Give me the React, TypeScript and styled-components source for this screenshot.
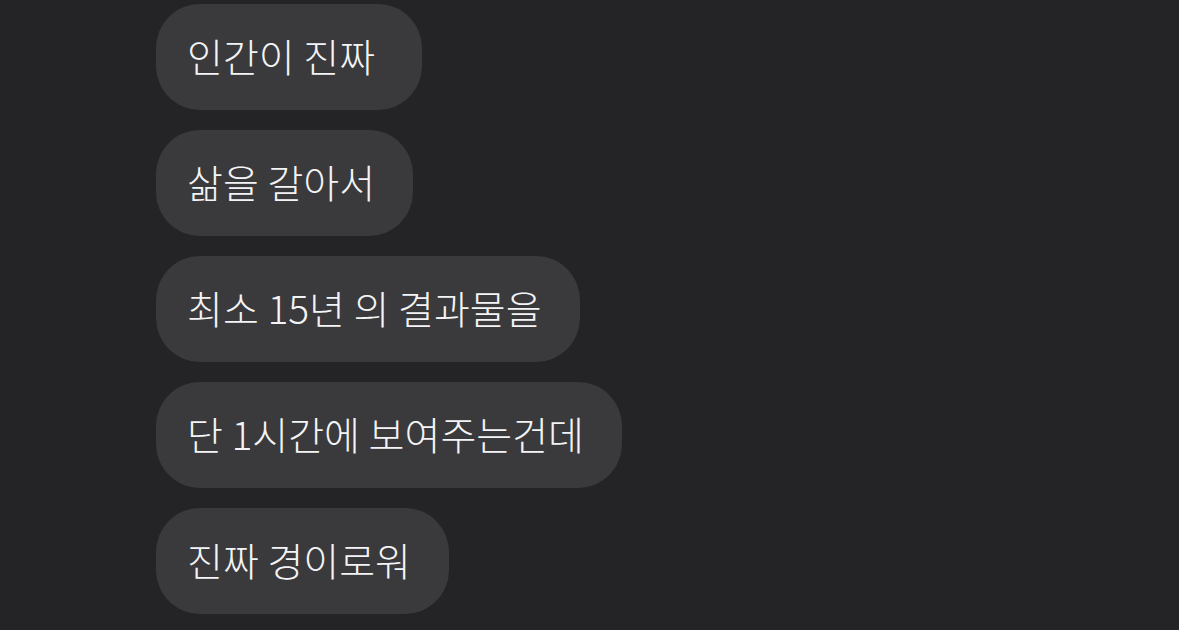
import React from "react";
import styled, { createGlobalStyle } from "styled-components";

const Global = createGlobalStyle`
  html, body {
    margin: 0;
    padding: 0;
    background: #242426;
  }
`;

const Thread = styled.div`
  width: 1179px;
  height: 630px;
  overflow: hidden;
  box-sizing: border-box;
  padding: 4px 0 0 156px;
  display: flex;
  flex-direction: column;
  align-items: flex-start;
  gap: 20px;
  background: #242426;
`;

const Bubble = styled.div`
  box-sizing: border-box;
  height: 106px;
  display: flex;
  align-items: center;
  padding: 0 38px 4px 31px;
  border-radius: 44px;
  background: #3a3a3c;
  color: #f4f4f6;
  font-family: "Noto Sans CJK KR", "Noto Sans", sans-serif;
  font-weight: 300;
  font-size: 39px;
  line-height: 1;
  white-space: pre;
`;

const messages = [
  "인간이 진짜 ",
  "삶을 갈아서",
  "최소 15년 의 결과물을",
  "단 1시간에 보여주는건데",
  "진짜 경이로워",
];

export default function App() {
  return (
    <>
      <Global />
      <Thread>
        {messages.map((m, i) => (
          <Bubble key={i}>{m}</Bubble>
        ))}
      </Thread>
    </>
  );
}
